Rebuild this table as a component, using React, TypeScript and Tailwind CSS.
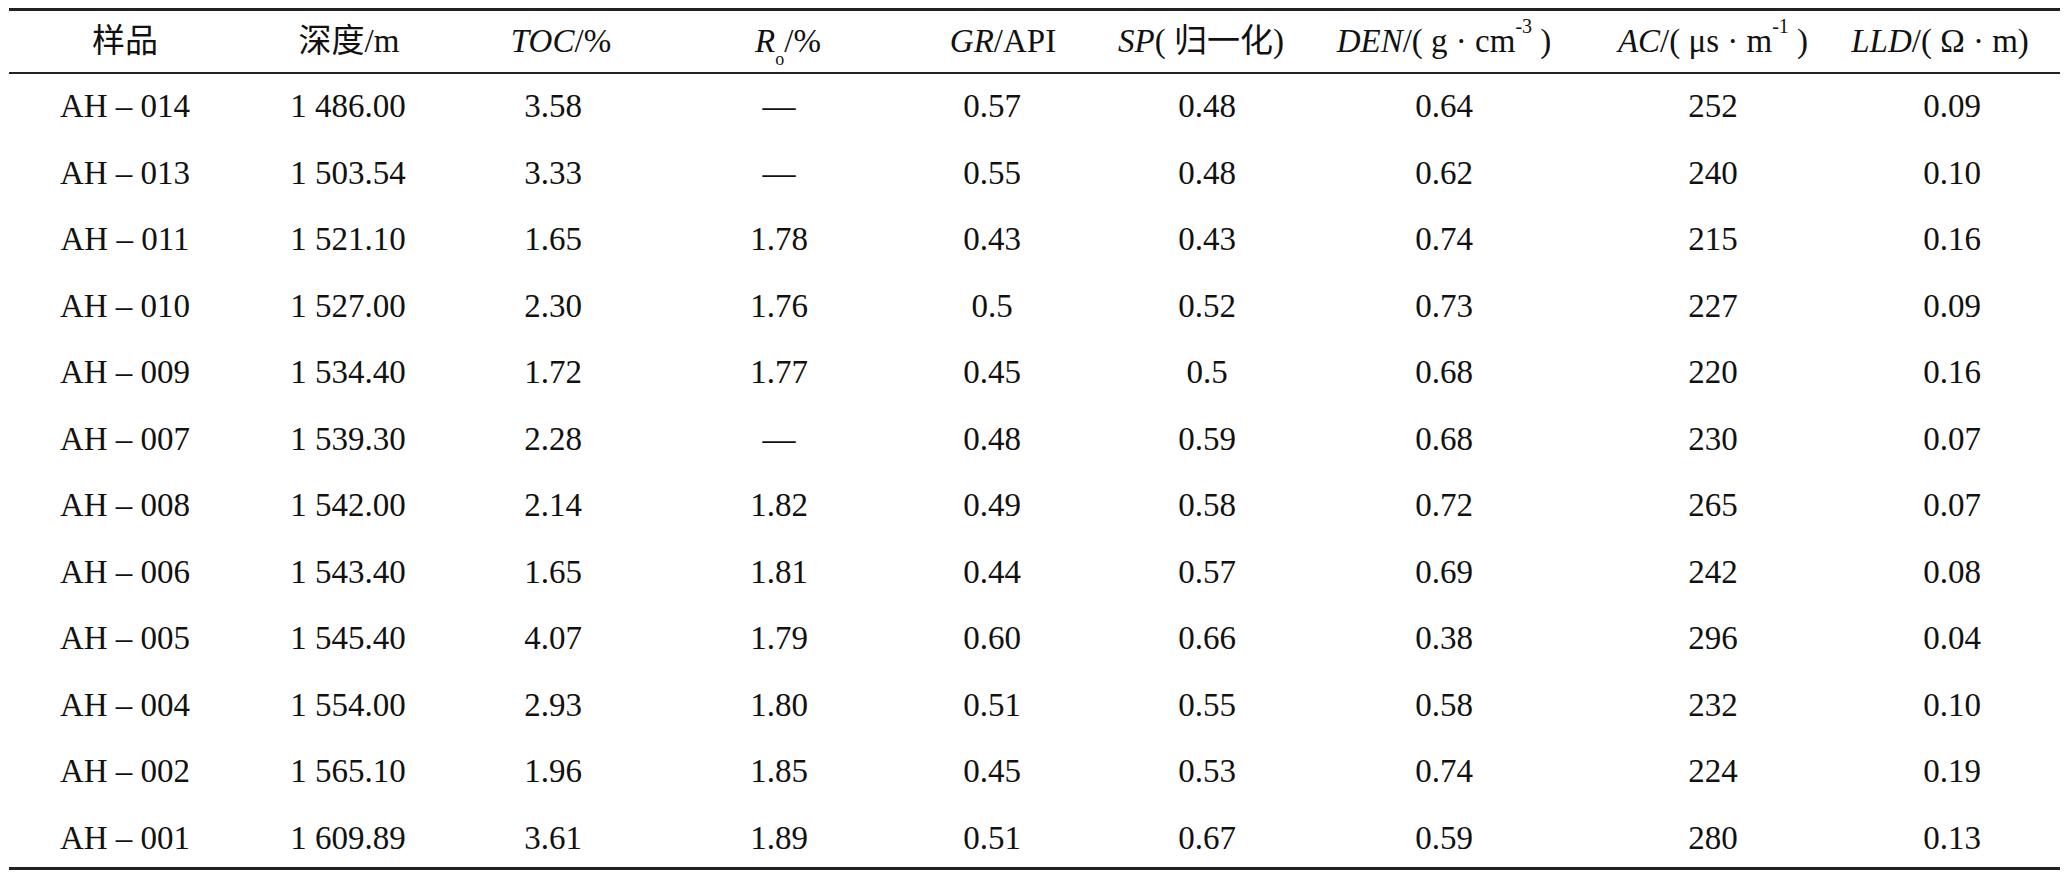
import type { ReactNode } from 'react'

type Col = { head: ReactNode; pad: string; headPad: string }

const cols: Col[] = [
  { head: <span>样品</span>, pad: 'pl-[4px]', headPad: 'pl-[4px]' },
  { head: <span>深度/m</span>, pad: 'pl-[8px]', headPad: 'pl-[10px]' },
  { head: <span><i>TOC</i>/%</span>, pad: 'pr-[12px]', headPad: 'pl-[4px]' },
  {
    head: <span><i>R</i><sub className="text-[18px] align-[-8px]">o</sub>/%</span>,
    pad: 'pl-[4px]',
    headPad: 'pl-[22px]',
  },
  { head: <span><i>GR</i>/API</span>, pad: 'pr-[3px]', headPad: 'pl-[19px]' },
  { head: <span><i>SP</i>( 归一化)</span>, pad: 'pr-[12px]', headPad: 'pr-[24px]' },
  {
    head: <span><i>DEN</i>/( g · cm<sup className="text-[20px] align-[9px]">-3</sup> )</span>,
    pad: 'pr-[17px]',
    headPad: 'pr-[17px]',
  },
  {
    head: <span><i>AC</i>/( μs · m<sup className="text-[20px] align-[9px]">-1</sup> )</span>,
    pad: 'pl-[14px]',
    headPad: 'pl-[14px]',
  },
  { head: <span><i>LLD</i>/( Ω · m)</span>, pad: 'pl-[11px]', headPad: 'pr-[13px]' },
]

const rows: string[][] = [
  ['AH – 014', '1 486.00', '3.58', '—', '0.57', '0.48', '0.64', '252', '0.09'],
  ['AH – 013', '1 503.54', '3.33', '—', '0.55', '0.48', '0.62', '240', '0.10'],
  ['AH – 011', '1 521.10', '1.65', '1.78', '0.43', '0.43', '0.74', '215', '0.16'],
  ['AH – 010', '1 527.00', '2.30', '1.76', '0.5', '0.52', '0.73', '227', '0.09'],
  ['AH – 009', '1 534.40', '1.72', '1.77', '0.45', '0.5', '0.68', '220', '0.16'],
  ['AH – 007', '1 539.30', '2.28', '—', '0.48', '0.59', '0.68', '230', '0.07'],
  ['AH – 008', '1 542.00', '2.14', '1.82', '0.49', '0.58', '0.72', '265', '0.07'],
  ['AH – 006', '1 543.40', '1.65', '1.81', '0.44', '0.57', '0.69', '242', '0.08'],
  ['AH – 005', '1 545.40', '4.07', '1.79', '0.60', '0.66', '0.38', '296', '0.04'],
  ['AH – 004', '1 554.00', '2.93', '1.80', '0.51', '0.55', '0.58', '232', '0.10'],
  ['AH – 002', '1 565.10', '1.96', '1.85', '0.45', '0.53', '0.74', '224', '0.19'],
  ['AH – 001', '1 609.89', '3.61', '1.89', '0.51', '0.67', '0.59', '280', '0.13'],
]

const grid = 'grid grid-cols-[228px_214px_216px_220px_213px_226px_253px_254px_227px]'

export default function App() {
  return (
    <div className="w-[2064px] h-[880px] bg-white pt-[8px] pl-[9px] text-[33px] text-[#111] font-['Liberation_Serif','Noto_Sans_CJK_SC',serif]">
      <div className="w-[2051px] border-t-[3px] border-b-[3px] border-[#222]">
        {/* header */}
        <div className={`${grid} h-[63px] border-b-2 border-[#222]`}>
          {cols.map((c, i) => (
            <div key={i} className={`flex items-center justify-center whitespace-nowrap leading-none ${c.headPad}`}>
              {c.head}
            </div>
          ))}
        </div>

        {rows.map((r, ri) => (
          <div key={ri} className={`${grid} h-[66.5px] last:h-[61px]`}>
            {r.map((v, ci) => (
              <div key={ci} className={`flex justify-center whitespace-nowrap leading-[64px] ${cols[ci].pad}`}>
                {v}
              </div>
            ))}
          </div>
        ))}
      </div>
    </div>
  )
}
